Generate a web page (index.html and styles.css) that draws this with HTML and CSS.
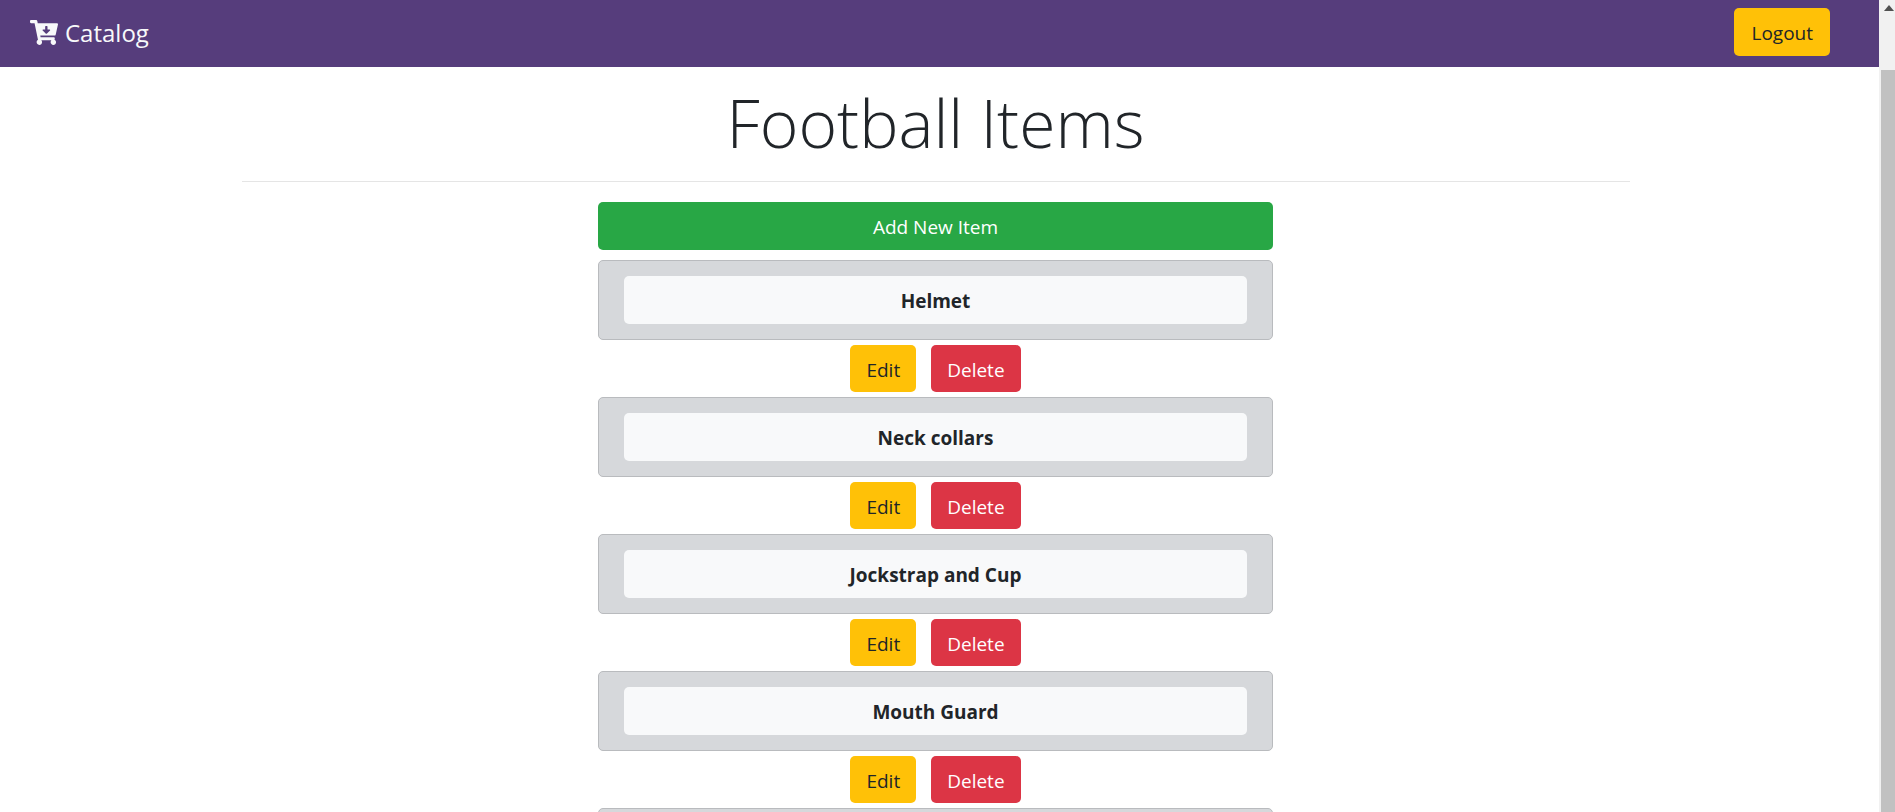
FILE: index.html
```html
<!DOCTYPE html>
<html lang="en">
<head>
<meta charset="utf-8">
<title>Catalog</title>
<link rel="stylesheet" href="styles.css">
</head>
<body>
<div class="page">
  <header class="navbar">
    <a class="brand" href="#">
      <svg class="brand-icon" viewBox="0 0 576 512" aria-hidden="true"><path fill="currentColor" d="M504.717 320H211.572l6.545 32h268.418c15.401 0 26.816 14.301 23.403 29.319l-5.517 24.276C523.112 414.668 536 433.828 536 456c0 31.202-25.519 56.444-56.824 55.994-29.823-.429-54.35-24.631-55.155-54.447-.44-16.287 6.085-31.049 16.803-41.548H231.176C241.553 426.165 248 440.326 248 456c0 31.813-26.528 57.431-58.67 55.938-28.54-1.325-51.751-24.385-53.251-52.917-1.158-22.034 10.436-41.455 28.051-51.586L93.883 64H24C10.745 64 0 53.255 0 40V24C0 10.745 10.745 0 24 0h102.529c11.401 0 21.228 8.021 23.513 19.19L159.208 64H551.99c15.401 0 26.816 14.301 23.403 29.319l-47.273 208C525.637 312.246 515.923 320 504.717 320zM403.029 192H360v-60c0-6.627-5.373-12-12-12h-24c-6.627 0-12 5.373-12 12v60h-43.029c-10.691 0-16.045 12.926-8.485 20.485l67.029 67.029c4.686 4.686 12.284 4.686 16.971 0l67.029-67.029c7.559-7.559 2.205-20.485-8.486-20.485z"/></svg>
      <span>Catalog</span>
    </a>
    <button class="btn btn-warning" type="button">Logout</button>
  </header>
  <main class="content">
    <div class="container">
      <h1 class="title">Football Items</h1>
      <hr class="rule">
      <div class="column">
        <button class="btn btn-success" type="button">Add New Item</button>
        <ul class="items">
          <li class="item">
            <div class="card"><a class="btn btn-light" href="#">Helmet</a></div>
            <div class="actions"><button class="btn btn-warning" type="button">Edit</button><button class="btn btn-danger" type="button">Delete</button></div>
          </li>
          <li class="item">
            <div class="card"><a class="btn btn-light" href="#">Neck collars</a></div>
            <div class="actions"><button class="btn btn-warning" type="button">Edit</button><button class="btn btn-danger" type="button">Delete</button></div>
          </li>
          <li class="item">
            <div class="card"><a class="btn btn-light" href="#">Jockstrap and Cup</a></div>
            <div class="actions"><button class="btn btn-warning" type="button">Edit</button><button class="btn btn-danger" type="button">Delete</button></div>
          </li>
          <li class="item">
            <div class="card"><a class="btn btn-light" href="#">Mouth Guard</a></div>
            <div class="actions"><button class="btn btn-warning" type="button">Edit</button><button class="btn btn-danger" type="button">Delete</button></div>
          </li>
          <li class="item">
            <div class="card"></div>
          </li>
        </ul>
      </div>
    </div>
  </main>
</div>
<div class="scrollbar" aria-hidden="true">
  <svg class="scroll-arrow" viewBox="0 0 10 6"><path fill="#505050" d="M0 6 5 0l5 6z"/></svg>
  <div class="scroll-thumb"></div>
</div>
</body>
</html>
```
FILE: styles.css
```css
* {
  box-sizing: border-box;
}

body {
  display: flex;
  height: 100vh;
  margin: 0;
  overflow: hidden;
  background: #fff;
  color: #212529;
  font-family: "Segoe UI", "Open Sans", "Noto Sans", sans-serif;
  font-size: 19px;
  line-height: 30px;
}

.page {
  flex: 1;
  min-width: 0;
  overflow: hidden;
}

.navbar {
  display: flex;
  align-items: center;
  justify-content: space-between;
  padding: 8px 49px 11px 30px;
  background: #563d7c;
}

.brand {
  display: flex;
  align-items: center;
  gap: 7px;
  padding-top: 1px;
  color: #f8f9fa;
  font-size: 24px;
  text-decoration: none;
}

.brand-icon {
  width: 28px;
  height: 25px;
}

.btn {
  padding: 9px 16px 7px;
  border: 1px solid transparent;
  border-radius: 5px;
  font: inherit;
  text-align: center;
  cursor: pointer;
}

.btn-warning {
  background: #ffc107;
  color: #212529;
}

.btn-success {
  width: 100%;
  background: #28a745;
  color: #fff;
}

.btn-danger {
  background: #dc3545;
  color: #fff;
}

.btn-light {
  display: block;
  background: #f8f9fa;
  color: #212529;
  font-weight: 700;
  text-decoration: none;
}

.content {
  padding: 0 8px 0 0;
}

.container {
  max-width: 1388px;
  margin: 0 auto;
}

.title {
  margin: 0;
  padding-bottom: 4px;
  font-size: 66px;
  font-weight: 300;
  line-height: 110px;
  text-align: center;
}

.rule {
  height: 1px;
  margin: 0 0 20px;
  border: 0;
  background: #e5e5e5;
}

.column {
  max-width: 675px;
  margin: 0 auto;
}

.items {
  margin: 10px 0 0;
  padding: 0;
  list-style: none;
}

.card {
  min-height: 80px;
  padding: 15px 25px;
  border: 1px solid #b9bbbe;
  border-radius: 5px;
  background: #d6d8db;
}

.actions {
  display: flex;
  justify-content: center;
  gap: 15px;
  padding: 5px 0;
}

.actions .btn {
  padding: 10px 15px 6px;
  line-height: 29px;
}

.scrollbar {
  display: flex;
  flex-direction: column;
  width: 16px;
  padding-left: 2px;
  background: #f1f1f1;
}

.scroll-arrow {
  width: 10px;
  height: 6px;
  margin: 5px 0 59px 3px;
}

.scroll-thumb {
  flex: 1;
  background: #c1c1c1;
}
```
